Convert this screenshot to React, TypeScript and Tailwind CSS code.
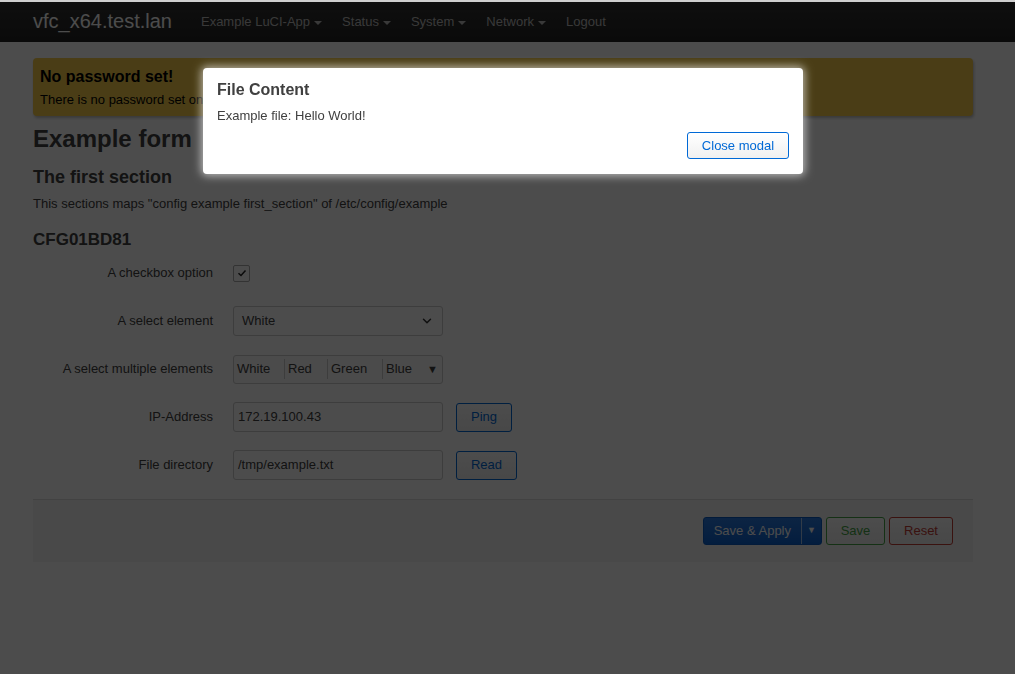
import { ChevronDown } from "lucide-react";

const font = "font-['Liberation_Sans',Arial,sans-serif]";

const NavItem = ({ label, caret = true }: { label: string; caret?: boolean }) => (
  <a className="flex items-center gap-[4px] text-[13px] text-[#bfbfbf]">
    {label}
    {caret && <span className="w-0 h-0 border-x-[4px] border-x-transparent border-t-[4px] border-t-[#bfbfbf] mt-[2px]" />}
  </a>
);

const Row = ({ label, children }: { label: string; children: React.ReactNode }) => (
  <div className="flex items-center h-[48px]">
    <label className="w-[180px] text-right text-[13px] text-[#404040]">{label}</label>
    <div className="ml-[20px] flex items-center gap-[13px]">{children}</div>
  </div>
);

const Field = ({ value }: { value: string }) => (
  <div className="w-[210px] h-[30px] border border-[#ccc] rounded-[3px] bg-white px-[4px] flex items-center text-[13px] text-[#404040]">
    {value}
  </div>
);

export default function App() {
  return (
    <div className={`${font} min-h-[674px] bg-white text-[#404040] border-t-2 border-[#cfcfcf]`}>
      <header className="h-[40px] bg-gradient-to-b from-[#333] to-[#222] flex items-center px-[33px]">
        <span className="text-[20px] text-white mr-[29px] -mt-[3px]">vfc_x64.test.lan</span>
        <nav className="flex items-center gap-[20px]">
          <NavItem label="Example LuCI-App" />
          <NavItem label="Status" />
          <NavItem label="System" />
          <NavItem label="Network" />
          <NavItem label="Logout" caret={false} />
        </nav>
      </header>

      <main className="w-[940px] ml-[33px]">
        <div className="mt-[16px] h-[58px] rounded-[4px] bg-[#f8cd4a] px-[7px] pt-[9px] shadow-[1px_2px_3px_rgba(0,0,0,0.25)]">
          <h4 className="text-[16px] font-bold text-black leading-[20px]">No password set!</h4>
          <p className="text-[13px] text-black mt-[3px]">
            There is no password set on this router. Please configure a root password to protect the web interface.
          </p>
        </div>

        <h2 className="text-[24px] font-bold text-[#404040] mt-[6px] leading-[34px]">Example form</h2>
        <h3 className="text-[18px] font-bold text-[#404040] mt-[9px] leading-[24px]">The first section</h3>
        <p className="text-[13px] text-[#404040] mt-[6px] leading-[18px]">
          This sections maps "config example first_section" of /etc/config/example
        </p>
        <h3 className="text-[17px] font-bold text-[#404040] mt-[16px] leading-[22px]">CFG01BD81</h3>

        <div className="-mt-[2px]">
          <Row label="A checkbox option">
            <div className="w-[17px] h-[17px] border border-[#aaa] rounded-[2px] bg-white flex items-center justify-center">
              <svg width="10" height="10" viewBox="0 0 10 10" fill="none">
                <path d="M1.5 5.2 L4 7.5 L8.5 2.5" stroke="#222" strokeWidth="1.5" />
              </svg>
            </div>
          </Row>
          <Row label="A select element">
            <div className="w-[210px] h-[30px] border border-[#ccc] rounded-[3px] bg-white px-[8px] flex items-center justify-between text-[13px] text-[#404040]">
              White
              <ChevronDown className="w-[14px] h-[14px] text-[#333]" strokeWidth={2.5} />
            </div>
          </Row>
          <Row label="A select multiple elements">
            <div className="w-[210px] h-[29px] border border-[#ccc] rounded-[3px] bg-[#fafafa] flex items-center text-[13px] text-[#404040]">
              <span className="w-[51px] pl-[3px] border-r border-[#ccc] leading-[20px]">White</span>
              <span className="w-[43px] pl-[3px] border-r border-[#ccc] leading-[20px]">Red</span>
              <span className="w-[55px] pl-[3px] border-r border-[#ccc] leading-[20px]">Green</span>
              <span className="flex-1 pl-[3px] pr-[4px] flex justify-between leading-[20px]">
                Blue<span className="text-[11px]">▼</span>
              </span>
            </div>
          </Row>
          <Row label="IP-Address">
            <Field value="172.19.100.43" />
            <button className="h-[29px] w-[56px] border border-[#0069d6] rounded-[3px] bg-gradient-to-b from-white to-[#f0f0f0] text-[13px] text-[#0069d6]">
              Ping
            </button>
          </Row>
          <Row label="File directory">
            <Field value="/tmp/example.txt" />
            <button className="h-[29px] w-[61px] border border-[#0069d6] rounded-[3px] bg-gradient-to-b from-white to-[#f0f0f0] text-[13px] text-[#0069d6]">
              Read
            </button>
          </Row>
        </div>

        <div className="mt-[10px] h-[63px] bg-[#f5f5f5] border-t border-[#ddd] flex items-center justify-end pr-[20px] gap-[4px]">
          <div className="flex h-[28px] rounded-[3px] bg-gradient-to-b from-[#2a7ae0] to-[#0a62d0] text-white text-[13px] border border-[#0a5cc4]">
            <span className="px-[10px] flex items-center border-r border-[#fff]/60">Save &amp; Apply</span>
            <span className="w-[19px] flex items-center justify-center text-[9px]">▼</span>
          </div>
          <button className="h-[28px] w-[59px] border border-[#46a546] rounded-[3px] bg-gradient-to-b from-white to-[#f0f0f0] text-[13px] text-[#46a546]">
            Save
          </button>
          <button className="h-[28px] w-[64px] border border-[#c43c35] rounded-[3px] bg-gradient-to-b from-white to-[#f0f0f0] text-[13px] text-[#c43c35]">
            Reset
          </button>
        </div>
      </main>

      <div className="fixed left-0 right-0 bottom-0 top-[2px] bg-black/70" />

      <div className="fixed left-[203px] top-[68px] w-[600px] h-[106px] bg-white rounded-[4px] shadow-[0_0_8px_2px_rgba(255,255,255,0.6)] px-[14px] pt-[12px]">
        <h4 className="text-[16px] font-bold text-[#404040] leading-[20px]">File Content</h4>
        <p className="text-[13px] text-[#404040] mt-[8px] leading-[16px]">Example file: Hello World!</p>
        <div className="flex justify-end mt-[8px]">
          <button className="h-[27px] w-[102px] border border-[#0069d6] rounded-[3px] bg-gradient-to-b from-white to-[#f0f0f0] text-[13px] text-[#0069d6]">
            Close modal
          </button>
        </div>
      </div>
    </div>
  );
}
